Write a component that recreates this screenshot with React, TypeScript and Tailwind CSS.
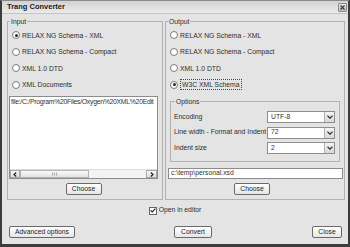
import React from "react";

const font = { fontFamily: "'Liberation Sans', Arial, sans-serif" };

function Radio({ label, checked, focus }: { label: string; checked?: boolean; focus?: boolean }) {
  return (
    <div className="flex items-center h-[16.5px] ml-[3px]">
      <span className="w-[8px] h-[8px] rounded-full border border-[#7c7c7c] bg-white flex items-center justify-center shrink-0">
        {checked && <span className="w-[3px] h-[3px] rounded-full bg-[#2c2c2c]" />}
      </span>
      <span
        className={
          "ml-[2px] leading-[9px] whitespace-nowrap " + (focus ? "border border-dotted border-[#444] px-[1px]" : "")
        }
      >
        {label}
      </span>
    </div>
  );
}

function Btn({ label, w }: { label: string; w: string }) {
  return (
    <div
      className={
        "h-[12px] border border-[#6a6a6a] rounded-[2px] bg-gradient-to-b from-[#ffffff] to-[#e6e6e6] flex items-center justify-center text-[#222] whitespace-nowrap " +
        w
      }
    >
      {label}
    </div>
  );
}

function Select({ value }: { value: string }) {
  return (
    <div className="w-[68px] h-[12px] border border-[#8e8e8e] bg-white flex items-center shrink-0">
      <span className="flex-1 pl-[3px] text-[#333]">{value}</span>
      <span className="w-[10px] h-[10px] border-l border-[#b0b0b0] bg-gradient-to-b from-[#f4f4f4] to-[#d8d8d8] flex items-center justify-center">
        <svg width="6" height="4" viewBox="0 0 6 4">
          <path d="M0.5 0.8 L3 3.2 L5.5 0.8" fill="none" stroke="#333" strokeWidth="1.2" />
        </svg>
      </span>
    </div>
  );
}

export default function App() {
  return (
    <div
      style={font}
      className="w-[350px] h-[247px] bg-[#e4e4e4] border-l-2 border-r-2 border-b-[3px] border-t border-t-[#8a8a8a] border-[#3c3c3c] flex flex-col text-[6.8px] text-[#2e2e2e] overflow-hidden"
    >
      {/* title bar */}
      <div className="h-[13px] bg-gradient-to-b from-[#d2d2d2] to-[#ebebeb] border-b border-[#c4c4c4] flex items-center justify-between pl-[5px] pr-[1px]">
        <span className="text-[7.5px] font-bold text-[#1a1a1a] leading-none">Trang Converter</span>
        <span className="w-[9px] h-[9px] border border-[#8a8a8a] rounded-[1px] bg-gradient-to-b from-[#e8e8e8] to-[#bcbcbc] flex items-center justify-center">
          <svg width="5" height="5" viewBox="0 0 5 5">
            <path d="M0.5 0.5 L4.5 4.5 M4.5 0.5 L0.5 4.5" stroke="#3a3a3a" strokeWidth="1.1" />
          </svg>
        </span>
      </div>

      {/* groups */}
      <div className="flex gap-[2px] pl-[5px] mt-[4px]">
        <fieldset className="w-[156px] border border-[#b2b2b2] px-[1px] pb-[4px] flex flex-col">
          <legend className="ml-[1px] px-[1px] leading-[7px]">Input</legend>
          <div className="pt-[2px]">
            <Radio label="RELAX NG Schema - XML" checked />
            <Radio label="RELAX NG Schema - Compact" />
            <Radio label="XML 1.0 DTD" />
            <Radio label="XML Documents" />
          </div>
          <div className="mt-[3px] w-[149px] h-[83px] border border-[#8c8c8c] bg-white flex flex-col">
            <div className="flex-1 overflow-hidden whitespace-nowrap pl-[1px] pt-[1px] leading-[8px] tracking-[-0.25px] text-[#333]">
              file:/C:/Program%20Files/Oxygen%20XML%20Edit
            </div>
            <div className="h-[9px] flex bg-[#f3f3f3] border-t border-[#dcdcdc]">
              <span className="w-[10px] h-full border border-[#a8a8a8] bg-gradient-to-b from-[#fafafa] to-[#dedede] flex items-center justify-center">
                <svg width="4" height="5" viewBox="0 0 4 5">
                  <path d="M3.2 0.5 L1 2.5 L3.2 4.5" fill="none" stroke="#222" strokeWidth="1.2" />
                </svg>
              </span>
              <span className="w-[69px] h-full border border-[#b4b4b4] bg-gradient-to-b from-[#fbfbfb] to-[#e2e2e2] flex items-center justify-center">
                <svg width="5" height="4" viewBox="0 0 5 4">
                  <path d="M0.5 0.5 V3.5 M2.5 0.5 V3.5 M4.5 0.5 V3.5" stroke="#9a9a9a" strokeWidth="0.8" />
                </svg>
              </span>
              <span className="flex-1" />
              <span className="w-[11px] h-full border border-[#a8a8a8] bg-gradient-to-b from-[#fafafa] to-[#dedede] flex items-center justify-center">
                <svg width="4" height="5" viewBox="0 0 4 5">
                  <path d="M0.8 0.5 L3 2.5 L0.8 4.5" fill="none" stroke="#222" strokeWidth="1.2" />
                </svg>
              </span>
            </div>
          </div>
          <div className="mt-auto pt-[4px] flex justify-center">
            <div className="ml-[-3px]">
              <Btn label="Choose" w="w-[36px]" />
            </div>
          </div>
        </fieldset>

        <fieldset className="w-[180px] border border-[#b2b2b2] px-[1px] pb-[4px] flex flex-col">
          <legend className="ml-[1px] px-[1px] leading-[7px]">Output</legend>
          <div className="pt-[2px]">
            <Radio label="RELAX NG Schema - XML" />
            <Radio label="RELAX NG Schema - Compact" />
            <Radio label="XML 1.0 DTD" />
            <Radio label="W3C XML Schema" checked focus />
          </div>
          <fieldset className="mt-[4.5px] mx-[3px] border border-[#b2b2b2] pl-[3px] pr-[4px] pt-[6.5px] pb-[6.5px] flex flex-col gap-[3.5px]">
            <legend className="ml-[1px] px-[1px] leading-[7px]">Options</legend>
            <div className="flex items-center justify-between">
              <span className="whitespace-nowrap">Encoding</span>
              <Select value="UTF-8" />
            </div>
            <div className="flex items-center justify-between">
              <span className="whitespace-nowrap">Line width - Format and Indent</span>
              <Select value="72" />
            </div>
            <div className="flex items-center justify-between">
              <span className="whitespace-nowrap">Indent size</span>
              <Select value="2" />
            </div>
          </fieldset>
          <div className="mt-[6.5px] ml-[1px] h-[11px] border border-[#8c8c8c] bg-white flex items-center pl-[2px] text-[#333]">
            c:\temp\personal.xsd
          </div>
          <div className="mt-auto pt-[4px] flex justify-center">
            <div className="ml-[-6px]">
              <Btn label="Choose" w="w-[36px]" />
            </div>
          </div>
        </fieldset>
      </div>

      {/* open in editor */}
      <div className="mt-[6px] h-[9px] flex items-center justify-center">
        <span className="w-[8px] h-[8px] border border-[#666] bg-white flex items-center justify-center">
          <svg width="6" height="5" viewBox="0 0 6 5">
            <path d="M0.6 2.4 L2.2 4 L5.4 0.7" fill="none" stroke="#222" strokeWidth="1.1" />
          </svg>
        </span>
        <span className="ml-[2px]">Open in editor</span>
      </div>

      {/* bottom buttons */}
      <div className="mt-[11px] flex pl-[7px] pr-[6px]">
        <Btn label="Advanced options" w="w-[66px]" />
        <div className="ml-[99px]">
          <Btn label="Convert" w="w-[38px]" />
        </div>
        <div className="ml-auto">
          <Btn label="Close" w="w-[30px]" />
        </div>
      </div>
    </div>
  );
}
